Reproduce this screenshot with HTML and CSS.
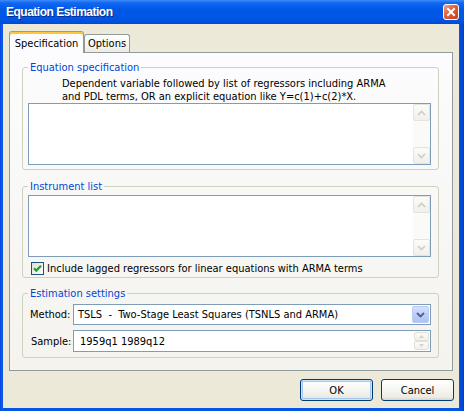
FILE: index.html
```html
<!DOCTYPE html>
<html>
<head>
<meta charset="utf-8">
<title>Equation Estimation</title>
<link rel="stylesheet" href="styles.css">
</head>
<body>
<div class="window">
  <div class="titlebar">
    <span class="title">Equation Estimation</span>
    <svg class="close" width="16" height="16" viewBox="0 0 16 16">
      <defs>
        <linearGradient id="cg" x1="0" y1="0" x2="1" y2="1">
          <stop offset="0" stop-color="#F0A88E"/>
          <stop offset="0.45" stop-color="#E0603C"/>
          <stop offset="1" stop-color="#C23A17"/>
        </linearGradient>
      </defs>
      <rect x="0.5" y="0.5" width="15" height="15" rx="2.5" fill="url(#cg)" stroke="#FFFFFF"/>
      <path d="M5 5 L11 11 M11 5 L5 11" stroke="#FFFFFF" stroke-width="2" stroke-linecap="square"/>
    </svg>
  </div>
  <div class="client">
    <div class="tabs">
      <div class="tab active">Specification</div>
      <div class="tab">Options</div>
    </div>
    <div class="panel">
      <fieldset class="group g1">
        <legend>Equation specification</legend>
        <div class="desc">Dependent variable followed by list of regressors including ARMA<br>and PDL terms, OR an explicit equation like Y=c(1)+c(2)*X.</div>
        <div class="textbox">
          <div class="tbtext"></div>
          <div class="vscroll">
            <div class="sbtn"><svg width="9" height="6" viewBox="0 0 9 6"><path d="M1 5 L4.5 1.5 L8 5" fill="none" stroke="#CFCDC2" stroke-width="1.6"/></svg></div>
            <div class="sbtn"><svg width="9" height="6" viewBox="0 0 9 6"><path d="M1 1 L4.5 4.5 L8 1" fill="none" stroke="#CFCDC2" stroke-width="1.6"/></svg></div>
          </div>
        </div>
      </fieldset>
      <fieldset class="group g2">
        <legend>Instrument list</legend>
        <div class="textbox">
          <div class="tbtext"></div>
          <div class="vscroll">
            <div class="sbtn"><svg width="9" height="6" viewBox="0 0 9 6"><path d="M1 5 L4.5 1.5 L8 5" fill="none" stroke="#CFCDC2" stroke-width="1.6"/></svg></div>
            <div class="sbtn"><svg width="9" height="6" viewBox="0 0 9 6"><path d="M1 1 L4.5 4.5 L8 1" fill="none" stroke="#CFCDC2" stroke-width="1.6"/></svg></div>
          </div>
        </div>
        <div class="checkrow">
          <svg class="check" width="13" height="13" viewBox="0 0 13 13">
            <defs>
              <linearGradient id="kg" x1="0" y1="0" x2="1" y2="1">
                <stop offset="0" stop-color="#DCDCD7"/>
                <stop offset="1" stop-color="#FFFFFF"/>
              </linearGradient>
            </defs>
            <rect x="0.5" y="0.5" width="12" height="12" fill="url(#kg)" stroke="#1C5180"/>
            <path d="M3 6.2 L5.3 8.6 L10 3.8" fill="none" stroke="#21A121" stroke-width="2.2"/>
          </svg>
          <span>Include lagged regressors for linear equations with ARMA terms</span>
        </div>
      </fieldset>
      <fieldset class="group g3">
        <legend>Estimation settings</legend>
        <div class="settings">
          <span class="lbl">Method:</span>
          <div class="combo">
            <span class="val">TSLS  -  Two-Stage Least Squares (TSNLS and ARMA)</span>
            <div class="ddbtn"><svg width="9" height="6" viewBox="0 0 9 6"><path d="M1 1 L4.5 4.5 L8 1" fill="none" stroke="#4D6185" stroke-width="1.8"/></svg></div>
          </div>
          <span class="lbl lbl2">Sample:</span>
          <div class="field">
            <span class="val2">1959q1 1989q12</span>
            <div class="spin">
              <div class="spbtn"><svg width="5" height="3" viewBox="0 0 5 3"><path d="M0 3 L2.5 0 L5 3 Z" fill="#D4D2C8"/></svg></div>
              <div class="spbtn"><svg width="5" height="3" viewBox="0 0 5 3"><path d="M0 0 L2.5 3 L5 0 Z" fill="#D4D2C8"/></svg></div>
            </div>
          </div>
        </div>
      </fieldset>
    </div>
    <div class="buttons">
      <button class="btn default">OK</button>
      <button class="btn">Cancel</button>
    </div>
  </div>
</div>
</body>
</html>
```
FILE: styles.css
```css
* { box-sizing: border-box; }
html, body { margin: 0; padding: 0; }
body {
  width: 464px;
  height: 411px;
  overflow: hidden;
  font-family: "DejaVu Sans Condensed", "DejaVu Sans", sans-serif;
  font-stretch: condensed;
  font-size: 11px;
  color: #000;
  background: #0555E3;
}
.window {
  width: 464px;
  height: 411px;
  display: flex;
  flex-direction: column;
  background: linear-gradient(90deg, #0831D9 0, #0C5EEA 1px, #0556E4 3px, #0556E4 459px, #0041D0 463px);
}
.titlebar {
  height: 24px;
  flex: none;
  display: flex;
  align-items: center;
  justify-content: space-between;
  padding: 0 5px 0 6px;
  background: linear-gradient(#3F8CF8 0%, #1067F2 12%, #0058E8 40%, #0055E3 85%, #0048D2 100%);
}
.title {
  color: #fff;
  font-family: "Liberation Sans", Arial, sans-serif;
  font-stretch: normal;
  font-weight: bold;
  font-size: 12px;
  letter-spacing: -0.5px;
  text-shadow: 1px 1px 0 #0A2A8C;
}
.close { display: block; }
.client {
  flex: 1;
  margin: 0 5px 3px 3px;
  background: #ECE9D8;
  display: flex;
  flex-direction: column;
}
.tabs {
  flex: none;
  height: 28px;
  display: flex;
  align-items: flex-end;
  padding-left: 6px;
}
.tab {
  display: flex;
  align-items: center;
  justify-content: center;
  border: 1px solid #919B9C;
  border-bottom: none;
  border-radius: 3px 3px 0 0;
  background: linear-gradient(#FFFFFF, #F5F4EF 60%, #ECEBE5);
  height: 18px;
  width: 46px;
}
.tab.active {
  width: 75px;
  height: 22px;
  margin-bottom: -1px;
  position: relative;
  z-index: 1;
  background: #FCFCFE;
  border-top: 1px solid #E68B2C;
  box-shadow: inset 0 2px 0 #FFC73C;
  padding-top: 1px;
}
.panel {
  flex: none;
  margin-left: 6px;
  width: 444px;
  height: 319px;
  border: 1px solid #919B9C;
  background: linear-gradient(#FCFCFE, #F4F3EE);
  padding: 8px 13px 0 12px;
}
.group {
  margin: 0;
  padding: 3px 7px 4px 5px;
  border: 1px solid #D0D0BF;
  border-radius: 3px;
  min-width: 0;
}
.group + .group { margin-top: 10px; }
.g2 { padding-top: 2px; padding-bottom: 1px; }
.g3 { margin-top: 9px !important; padding-top: 4px; padding-bottom: 5px; }
.group legend {
  padding: 0 2px;
  margin: 0;
  color: #0046D5;
  line-height: 13px;
}
.desc {
  padding-left: 34px;
  line-height: 13px;
}
.textbox {
  display: flex;
  height: 62px;
  border: 1px solid #7F9DB9;
  background: #fff;
}
.tbtext { flex: 1; }
.vscroll {
  width: 17px;
  display: flex;
  flex-direction: column;
  justify-content: space-between;
  background: #FAFAF7;
}
.sbtn {
  height: 17px;
  display: flex;
  align-items: center;
  justify-content: center;
  border: 1px solid #E6E4DA;
  border-radius: 2px;
  background: linear-gradient(#FBFBF9, #F1F0EA);
}
.sbtn svg { display: block; }
.checkrow {
  display: flex;
  align-items: center;
  gap: 3px;
  margin-top: 3px;
  height: 16px;
  padding-left: 3px;
}
.check { display: block; flex: none; }
.settings {
  display: grid;
  grid-template-columns: 45px 1fr;
  row-gap: 5px;
  align-items: center;
}
.lbl { padding-left: 2px; }
.lbl2 { padding-left: 3px; }
.combo, .field {
  height: 21px;
  border: 1px solid #7F9DB9;
  background: #fff;
  display: flex;
  align-items: center;
  justify-content: space-between;
  padding: 1px;
}
.field { height: 22px; }
.val { padding-left: 3px; white-space: pre; }
.val2 { padding-left: 5px; }
.ddbtn {
  width: 17px;
  height: 100%;
  display: flex;
  align-items: center;
  justify-content: center;
  border: 1px solid #BBCBF4;
  border-radius: 2px;
  background: linear-gradient(#D4E0FC, #B9CCF8 60%, #AEC3F4);
}
.ddbtn svg { display: block; }
.spin {
  width: 15px;
  height: 100%;
  display: flex;
  flex-direction: column;
}
.spbtn {
  flex: 1;
  display: flex;
  align-items: center;
  justify-content: center;
  border: 1px solid #E2E0D6;
  border-radius: 2px;
  background: linear-gradient(#FBFBF9, #F1F0EA);
}
.spbtn svg { display: block; }
.buttons {
  display: flex;
  justify-content: flex-end;
  gap: 8px;
  padding: 8px 5px 0 0;
}
.btn {
  width: 73px;
  height: 22px;
  border: 1px solid #003C74;
  border-radius: 3px;
  background: linear-gradient(#FFFFFF, #F5F5F1 50%, #ECEBE5 85%, #D8D3C8);
  font: inherit;
  color: #000;
  padding: 0;
}
.btn.default {
  box-shadow: inset 0 0 0 1px #CEE3FC, inset 0 0 0 2px #A8C6F2;
}
```
